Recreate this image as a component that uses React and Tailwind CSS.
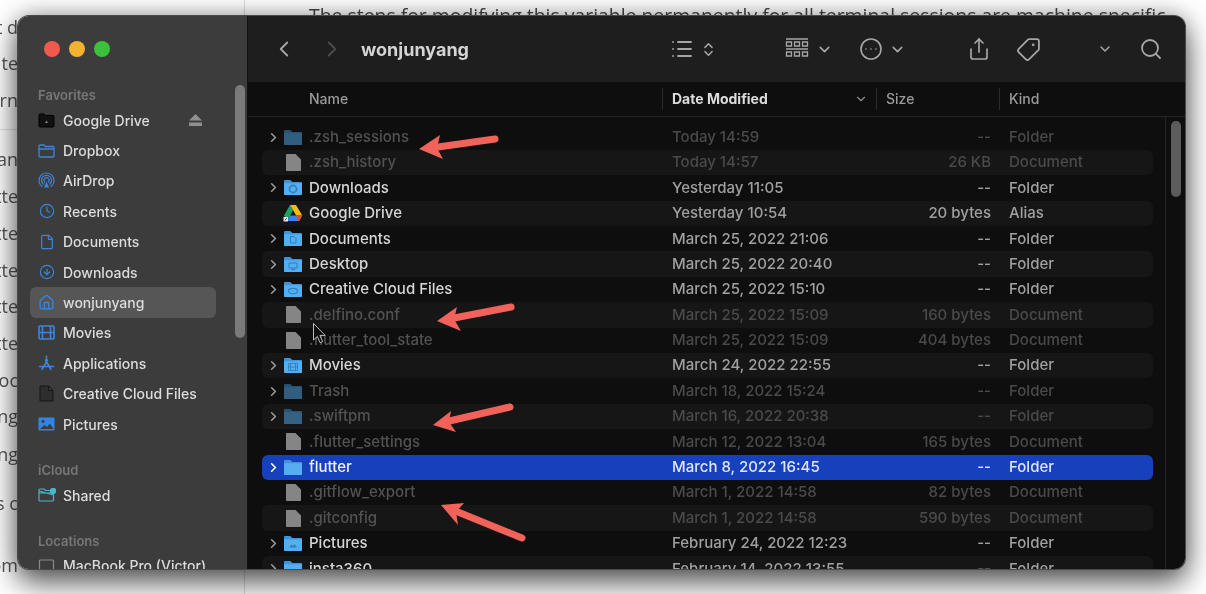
import { ChevronDown, ChevronLeft, ChevronRight, ChevronsUpDown, CircleArrowDown, CircleEllipsis, Clock, File, House, List, Search, Share, Tag } from "lucide-react";

const rows = [
  { name: ".zsh_sessions", date: "Today 14:59", size: "--", kind: "Folder", type: "folder", dim: true },
  { name: ".zsh_history", date: "Today 14:57", size: "26 KB", kind: "Document", type: "doc", dim: true },
  { name: "Downloads", date: "Yesterday 11:05", size: "--", kind: "Folder", type: "folder", glyph: "download" },
  { name: "Google Drive", date: "Yesterday 10:54", size: "20 bytes", kind: "Alias", type: "drive" },
  { name: "Documents", date: "March 25, 2022 21:06", size: "--", kind: "Folder", type: "folder", glyph: "doc" },
  { name: "Desktop", date: "March 25, 2022 20:40", size: "--", kind: "Folder", type: "folder", glyph: "desktop" },
  { name: "Creative Cloud Files", date: "March 25, 2022 15:10", size: "--", kind: "Folder", type: "folder", glyph: "eye" },
  { name: ".delfino.conf", date: "March 25, 2022 15:09", size: "160 bytes", kind: "Document", type: "doc", dim: true },
  { name: ".flutter_tool_state", date: "March 25, 2022 15:09", size: "404 bytes", kind: "Document", type: "doc", dim: true },
  { name: "Movies", date: "March 24, 2022 22:55", size: "--", kind: "Folder", type: "folder", glyph: "film" },
  { name: "Trash", date: "March 18, 2022 15:24", size: "--", kind: "Folder", type: "folder", dim: true },
  { name: ".swiftpm", date: "March 16, 2022 20:38", size: "--", kind: "Folder", type: "folder", dim: true },
  { name: ".flutter_settings", date: "March 12, 2022 13:04", size: "165 bytes", kind: "Document", type: "doc", dim: true },
  { name: "flutter", date: "March 8, 2022 16:45", size: "--", kind: "Folder", type: "folder", selected: true },
  { name: ".gitflow_export", date: "March 1, 2022 14:58", size: "82 bytes", kind: "Document", type: "doc", dim: true },
  { name: ".gitconfig", date: "March 1, 2022 14:58", size: "590 bytes", kind: "Document", type: "doc", dim: true },
  { name: "Pictures", date: "February 24, 2022 12:23", size: "--", kind: "Folder", type: "folder", glyph: "image" },
  { name: "insta360", date: "February 14, 2022 13:55", size: "--", kind: "Folder", type: "folder" },
];

// bits of the web page that stick out left of the window
const backdrop = [
  ["t d", 15], ["te", 51], ["rn", 88], ["an", 147], ["tte", 184], ["tte", 221], ["tte", 258],
  ["tte", 294], ["tte", 331], ["ooc", 368], ["ang", 404], ["ng", 442], ["s c", 491], ["om", 553],
];

const FolderIcon = ({ glyph, dim }) => (
  <svg width="20" height="17" viewBox="0 0 20 17" className={dim ? "opacity-50" : ""}>
    <path d="M1 4V2.2C1 1.5 1.5 1 2.2 1h4.6c.5 0 .8.2 1.1.5L9.4 3H18c.6 0 1 .4 1 1v1H1z" fill="#3f93d6" />
    <path d="M1 4.2h18V15c0 .6-.4 1-1 1H2c-.6 0-1-.4-1-1z" fill="#55aeef" />
    {glyph === "download" && <circle cx="10" cy="10" r="3.6" fill="none" stroke="#2f7fc0" strokeWidth="1.6" />}
    {glyph === "doc" && <path d="M7.5 6.5h3.5l2 2v4.5H7.5z" fill="none" stroke="#2f7fc0" strokeWidth="1" />}
    {glyph === "desktop" && <path d="M6 7h8v5H6zM8 13.5h4" fill="none" stroke="#2f7fc0" strokeWidth="1" />}
    {glyph === "eye" && <ellipse cx="10" cy="10" rx="4.5" ry="2.6" fill="none" stroke="#2f7fc0" strokeWidth="1.2" />}
    {glyph === "film" && <path d="M5.5 6.5h9v7h-9zM5.5 10h9M7.5 6.5v7M12.5 6.5v7" fill="none" stroke="#2f7fc0" strokeWidth="0.9" />}
    {glyph === "image" && <path d="M6 12.5l2.5-3 1.5 1.5 1.5-2 2.5 3.5z" fill="#2f7fc0" />}
  </svg>
);

const DocIcon = () => (
  <svg width="17" height="19" viewBox="0 0 17 19">
    <path d="M1 1.8C1 1.3 1.3 1 1.8 1H10.5l5.5 5.6v10.6c0 .5-.3.8-.8.8H1.8c-.5 0-.8-.3-.8-.8z" fill="#858585" />
  </svg>
);

const DriveIcon = () => (
  <svg width="20" height="18" viewBox="0 0 20 18">
    <path d="M7 1L10 6.4 4.2 17 1 11.6z" fill="#1ea362" />
    <path d="M7 1h6l6.3 10.6h-6.2z" fill="#f5bb12" />
    <path d="M7 11.6h12.3L16.2 17H4.2z" fill="#3f7fee" />
    <path d="M13.5 11.6h5.8L16.2 17h-1.5z" fill="#dd4b3e" />
    <rect x="0.5" y="13" width="4.5" height="4.5" rx="0.6" fill="#e6e6e6" />
    <path d="M1.8 16.3l2-2" stroke="#222" strokeWidth="0.9" />
  </svg>
);

const Row = ({ row, striped }) => {
  const text = row.selected ? "text-[#eef2fc]" : row.dim ? "text-[#525252]" : "text-[#d6d6d6]";
  const sub = row.selected ? "text-[#dfe6fa]" : row.dim ? "text-[#4a4a4a]" : "text-[#a0a0a0]";
  const bg = row.selected ? "bg-[#1740bd]" : striped ? "bg-[#161616]" : "";
  return (
    <div className={`grid grid-cols-[47px_363px_319px_1fr] items-center shrink-0 h-[25.4px] rounded-md text-[15px] font-medium ${bg}`}>
      <div className="flex items-center h-full">
        <span className="w-[21px] flex justify-center pl-[2px]">
          {row.type === "folder" && (
            <ChevronRight size={15} strokeWidth={2.6} className={row.selected ? "text-white" : "text-[#9a9a9a]"} />
          )}
        </span>
        <span className="w-[20px] flex justify-center">
          {row.type === "folder" && <FolderIcon glyph={row.glyph} dim={row.dim} />}
          {row.type === "doc" && <DocIcon />}
          {row.type === "drive" && <DriveIcon />}
        </span>
      </div>
      <span className={`truncate ${text}`}>{row.name}</span>
      <div className="flex justify-between">
        <span className={sub}>{row.date}</span>
        <span className={sub}>{row.size}</span>
      </div>
      <span className={`pl-[18px] ${sub}`}>{row.kind}</span>
    </div>
  );
};

const Item = ({ icon, label, active, tint = "text-[#3b86dc]" }) => (
  <div className={`flex items-center shrink-0 h-[30.4px] w-[186px] rounded-md ${active ? "bg-[#565656]" : ""}`}>
    <span className={`w-[33px] flex justify-center ${tint}`}>{icon}</span>
    <span className="text-[14px] font-medium text-[#dcdcdc]">{label}</span>
  </div>
);

const SectionLabel = ({ children, className }) => (
  <div className={`text-[13px] font-semibold text-[#777777] pl-[8px] ${className}`}>{children}</div>
);

const Sidebar = () => (
  <div className="relative w-[230px] shrink-0 bg-[#3c3c3c] border-r border-[#111111] pl-[12px] overflow-hidden">
    <div className="flex gap-[9px] pt-[25px] pl-[14px]">
      <span className="w-[16px] h-[16px] rounded-full bg-[#ef5a4f]" />
      <span className="w-[16px] h-[16px] rounded-full bg-[#f4b231]" />
      <span className="w-[16px] h-[16px] rounded-full bg-[#3ec13a]" />
    </div>
    <SectionLabel className="mt-[29px] h-[19px]">Favorites</SectionLabel>
    <div className="flex flex-col relative">
      <Item
        label="Google Drive"
        tint="text-black"
        icon={
          <svg width="17" height="15" viewBox="0 0 17 15">
            <path d="M1 3V2c0-.5.4-1 1-1h4l1.4 1.4H15c.6 0 1 .4 1 1V13c0 .6-.4 1-1 1H2c-.6 0-1-.4-1-1z" fill="#111" stroke="#000" />
            <path d="M7 10l1.5-2.5L10 10z" fill="#888" />
          </svg>
        }
      />
      <svg width="13" height="12" viewBox="0 0 13 12" className="absolute left-[159px] top-[9px] text-[#8f8f8f]">
        <path d="M6.5 0L13 6.5H0z M0 8.5h13V12H0z" fill="currentColor" />
      </svg>
      <Item
        label="Dropbox"
        icon={
          <svg width="17" height="14" viewBox="0 0 17 14" fill="none" stroke="currentColor" strokeWidth="1.3">
            <path d="M1 3V2c0-.5.4-1 1-1h4l1.4 1.5H15c.6 0 1 .4 1 1V12c0 .6-.4 1-1 1H2c-.6 0-1-.4-1-1zM1 5h15" />
          </svg>
        }
      />
      <Item
        label="AirDrop"
        icon={
          <svg width="17" height="17" viewBox="0 0 17 17" fill="none" stroke="currentColor" strokeWidth="1.2" strokeLinecap="round">
            <path d="M4 14.5a7.5 7.5 0 1 1 9 0" />
            <path d="M5.3 12.2a5 5 0 1 1 6.4 0" />
            <path d="M6.7 10.2a2.6 2.6 0 1 1 3.6 0" />
            <path d="M8.5 9.5l2.5 6h-5z" fill="currentColor" stroke="none" />
          </svg>
        }
      />
      <Item label="Recents" icon={<Clock size={16} strokeWidth={1.7} />} />
      <Item label="Documents" icon={<File size={16} strokeWidth={1.8} />} />
      <Item label="Downloads" icon={<CircleArrowDown size={16} strokeWidth={1.7} />} />
      <Item label="wonjunyang" active icon={<House size={17} strokeWidth={1.9} />} />
      <Item
        label="Movies"
        icon={
          <svg width="17" height="15" viewBox="0 0 17 15" fill="none" stroke="currentColor" strokeWidth="1.6">
            <rect x="1" y="1" width="15" height="13" rx="1" />
            <path d="M1 7.5h15M4.5 1v13M12.5 1v13" />
          </svg>
        }
      />
      <Item
        label="Applications"
        icon={
          <svg width="17" height="16" viewBox="0 0 17 16" fill="none" stroke="currentColor" strokeWidth="1.5" strokeLinecap="round">
            <path d="M8.5 1v3M4 14.5L9.5 5M13 14.5L7.5 5M1.5 11.5h14" />
          </svg>
        }
      />
      <Item
        label="Creative Cloud Files"
        icon={
          <svg width="15" height="17" viewBox="0 0 15 17" fill="#2e2e2e" stroke="#151515" strokeWidth="1">
            <path d="M1 1h8.5L14 5.5V16H1zM9.5 1v4.5H14" />
          </svg>
        }
      />
      <Item
        label="Pictures"
        icon={
          <svg width="17" height="14" viewBox="0 0 17 14">
            <rect x="0.5" y="0.5" width="16" height="13" rx="1" fill="#2f86e8" />
            <circle cx="5" cy="4.2" r="1.5" fill="#3c3c3c" />
            <path d="M2 12l4.5-4 2.5 2 3-3.5 3.5 5.5z" fill="#3c3c3c" />
          </svg>
        }
      />
    </div>
    <SectionLabel className="mt-[22px] h-[19px]">iCloud</SectionLabel>
    <Item
      label="Shared"
      tint="text-[#46b6c9]"
      icon={
        <svg width="18" height="14" viewBox="0 0 18 14" fill="none" stroke="currentColor" strokeWidth="1.2">
          <path d="M1 3V2c0-.5.4-1 1-1h4l1.4 1.5H12M15.5 7v5c0 .6-.4 1-1 1H2c-.6 0-1-.4-1-1V3zM1 5h11" />
          <circle cx="15" cy="3" r="2.6" fill="currentColor" />
        </svg>
      }
    />
    <SectionLabel className="mt-[21px] h-[19px]">Locations</SectionLabel>
    <Item
      label="MacBook Pro (Victor)"
      tint="text-[#8a8a8a]"
      icon={
        <svg width="17" height="13" viewBox="0 0 17 13" fill="none" stroke="currentColor" strokeWidth="1.2">
          <rect x="1.5" y="1" width="14" height="10" rx="1" />
        </svg>
      }
    />
    <div className="absolute left-[217px] top-[69px] w-[10px] h-[253px] rounded-full bg-[#7a7a7a]" />
  </div>
);

const Toolbar = () => (
  <div className="flex items-center h-[66px] shrink-0 bg-[#1e1e1e] text-[#a6a6a6]">
    <ChevronLeft size={26} strokeWidth={1.7} className="ml-[23px]" />
    <ChevronRight size={26} strokeWidth={1.7} className="ml-[22px] text-[#4c4c4c]" />
    <span className="ml-[16px] w-[309px] text-[18px] font-bold text-[#d4d4d4]">wonjunyang</span>
    <List size={24} strokeWidth={1.8} />
    <ChevronsUpDown size={17} strokeWidth={2} className="ml-[6px]" />
    <svg width="24" height="24" viewBox="0 0 24 24" fill="none" stroke="currentColor" strokeWidth="1.3" className="ml-[68px]">
      <path d="M1 2h22M1 12h22" />
      <path d="M1.5 5h5v4h-5zM9.5 5h5v4h-5zM17.5 5h5v4h-5zM1.5 15h5v4h-5zM9.5 15h5v4h-5zM17.5 15h5v4h-5z" />
    </svg>
    <ChevronDown size={17} strokeWidth={2.2} className="ml-[7px]" />
    <CircleEllipsis size={24} strokeWidth={1.6} className="ml-[26px]" />
    <ChevronDown size={17} strokeWidth={2.2} className="ml-[6px]" />
    <Share size={24} strokeWidth={1.7} className="ml-[61px]" />
    <Tag size={25} strokeWidth={1.7} className="ml-[25px] -scale-x-100" />
    <ChevronDown size={16} strokeWidth={2.2} className="ml-[56px]" />
    <Search size={24} strokeWidth={1.8} className="ml-[26px]" />
  </div>
);

const ColumnHead = ({ className, children }) => (
  <div className={`flex items-center h-[22px] pl-[9px] border-l border-[#2b2b2b] text-[14px] ${className}`}>{children}</div>
);

const FileList = () => (
  <div className="flex flex-col flex-1 min-w-0 bg-[#0e0e0e]">
    <Toolbar />
    <div className="flex items-center h-[35px] shrink-0 pb-[1px] border-b border-[#242424] font-medium text-[#9b9b9b]">
      <span className="w-[414px] pl-[61px] text-[14px]">Name</span>
      <ColumnHead className="w-[214px] font-bold text-[#dcdcdc]">
        Date Modified
        <ChevronDown size={14} className="ml-auto mr-[8px] text-[#8e8e8e]" />
      </ColumnHead>
      <ColumnHead className="w-[123px]">Size</ColumnHead>
      <ColumnHead>Kind</ColumnHead>
    </div>
    <div className="flex flex-1 min-h-0">
      <div className="flex flex-col w-[918px] pl-[14px] pr-[12px] pt-[7.5px] overflow-hidden border-r border-[#242424]">
        {rows.map((row, i) => (
          <Row key={row.name} row={row} striped={i % 2 === 1} />
        ))}
      </div>
      <div className="flex-1 flex justify-center pt-[4px]">
        <div className="w-[10px] h-[76px] rounded-full bg-[#5c5c5c]" />
      </div>
    </div>
  </div>
);

const arrows = [
  { line: "M495 139L431 148", head: "419,149 440,135 437,148 443,159" },
  { line: "M511 307L449 319", head: "437,321 457,307 454,319 461,331" },
  { line: "M510 407L445 422", head: "433,425 451,411 449,422 456,432" },
  { line: "M522 538L453 510", head: "441,505 464,503 456,512 458,525" },
];

export default function App() {
  return (
    <div className="relative w-[1206px] h-[594px] overflow-hidden bg-white blur-[0.5px] font-['Inter',sans-serif]">
      <div className="absolute left-[309px] top-[1px] whitespace-nowrap text-[19.4px] text-[#444444] font-['Open_Sans',sans-serif]">
        The steps for modifying this variable permanently for all terminal sessions are machine specific
      </div>
      {backdrop.map(([s, top]) => (
        <div key={top} className="absolute left-0 w-[18px] flex justify-end whitespace-nowrap text-[18px] leading-[24px] text-[#555555] font-['Open_Sans',sans-serif]" style={{ top }}>
          <span className="shrink-0">{s}</span>
        </div>
      ))}
      <div className="absolute left-0 top-[129px] w-[18px] h-px bg-[#e4e4e4]" />
      <div className="absolute left-[244px] top-0 w-px h-full bg-[#dddddd]" />

      <div className="relative ml-[18px] mt-[16px] w-[1167px] h-[553px] flex rounded-[11px] overflow-hidden shadow-[0_0_0_1px_#4a4a4a,0_0_24px_rgba(0,0,0,0.35),0_14px_30px_rgba(0,0,0,0.6)]">
        <Sidebar />
        <FileList />
      </div>

      <svg className="absolute inset-0" width="1206" height="594" viewBox="0 0 1206 594">
        {arrows.map((a) => (
          <g key={a.line}>
            <path d={a.line} stroke="#f1625a" strokeWidth="7" strokeLinecap="round" fill="none" />
            <polygon points={a.head} fill="#f1625a" />
          </g>
        ))}
        <path d="M313.5 323.5v16.5l3.8-3.6 2.7 6.3 2.6-1.1-2.7-6.2h5.3z" fill="#0b0b0b" stroke="#cfcfcf" strokeWidth="0.9" />
      </svg>
    </div>
  );
}
